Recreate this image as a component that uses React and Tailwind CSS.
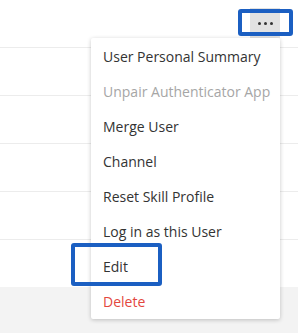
import React from 'react';

export default function App() {
  const items = [
    { label: 'User Personal Summary', tone: 'text-[#333333]' },
    { label: 'Unpair Authenticator App', tone: 'text-[#a6a6a6]' },
    { label: 'Merge User', tone: 'text-[#333333]' },
    { label: 'Channel', tone: 'text-[#333333]' },
    { label: 'Reset Skill Profile', tone: 'text-[#333333]' },
    { label: 'Log in as this User', tone: 'text-[#333333]' },
    { label: 'Edit', tone: 'text-[#333333]' },
    { label: 'Delete', tone: 'text-[#e3473e]' },
  ];

  return (
    <div className="relative w-[298px] h-[333px] overflow-hidden bg-[#f3f3f3] font-['Open_Sans',sans-serif]">
      <div className="bg-white">
        <div className="h-[48px] border-b border-[#ececec] flex justify-end pr-[18px] pt-[8px]">
          <button className="w-[30px] h-[30px] bg-[#e2e2e2] flex items-center justify-center gap-[3px]">
            <span className="w-[3px] h-[3px] rounded-full bg-[#333333]" />
            <span className="w-[3px] h-[3px] rounded-full bg-[#333333]" />
            <span className="w-[3px] h-[3px] rounded-full bg-[#333333]" />
          </button>
        </div>
        <div className="h-[48px] border-b border-[#ececec]" />
        <div className="h-[48px] border-b border-[#ececec]" />
        <div className="h-[48px] border-b border-[#ececec]" />
        <div className="h-[48px] border-b border-[#ececec]" />
        <div className="h-[47px]" />
      </div>

      {/* dropdown */}
      <div className="absolute left-[91px] top-[38px] w-[189px] pt-[1px] bg-white rounded-[2px] shadow-[0_1px_4px_rgba(0,0,0,0.22)]">
        {items.map((item, i) => (
          <div key={i} className={`h-[35px] flex items-center pl-[12px] text-[14px] ${item.tone}`}>
            {item.label}
          </div>
        ))}
      </div>

      {/* highlight boxes */}
      <div className="absolute left-[238px] top-[9px] w-[55px] h-[27px] border-4 border-[#1b5fc2] rounded-[3px]" />
      <div className="absolute left-[71px] top-[243px] w-[91px] h-[43px] border-4 border-[#1b5fc2] rounded-[3px]" />
    </div>
  );
}
